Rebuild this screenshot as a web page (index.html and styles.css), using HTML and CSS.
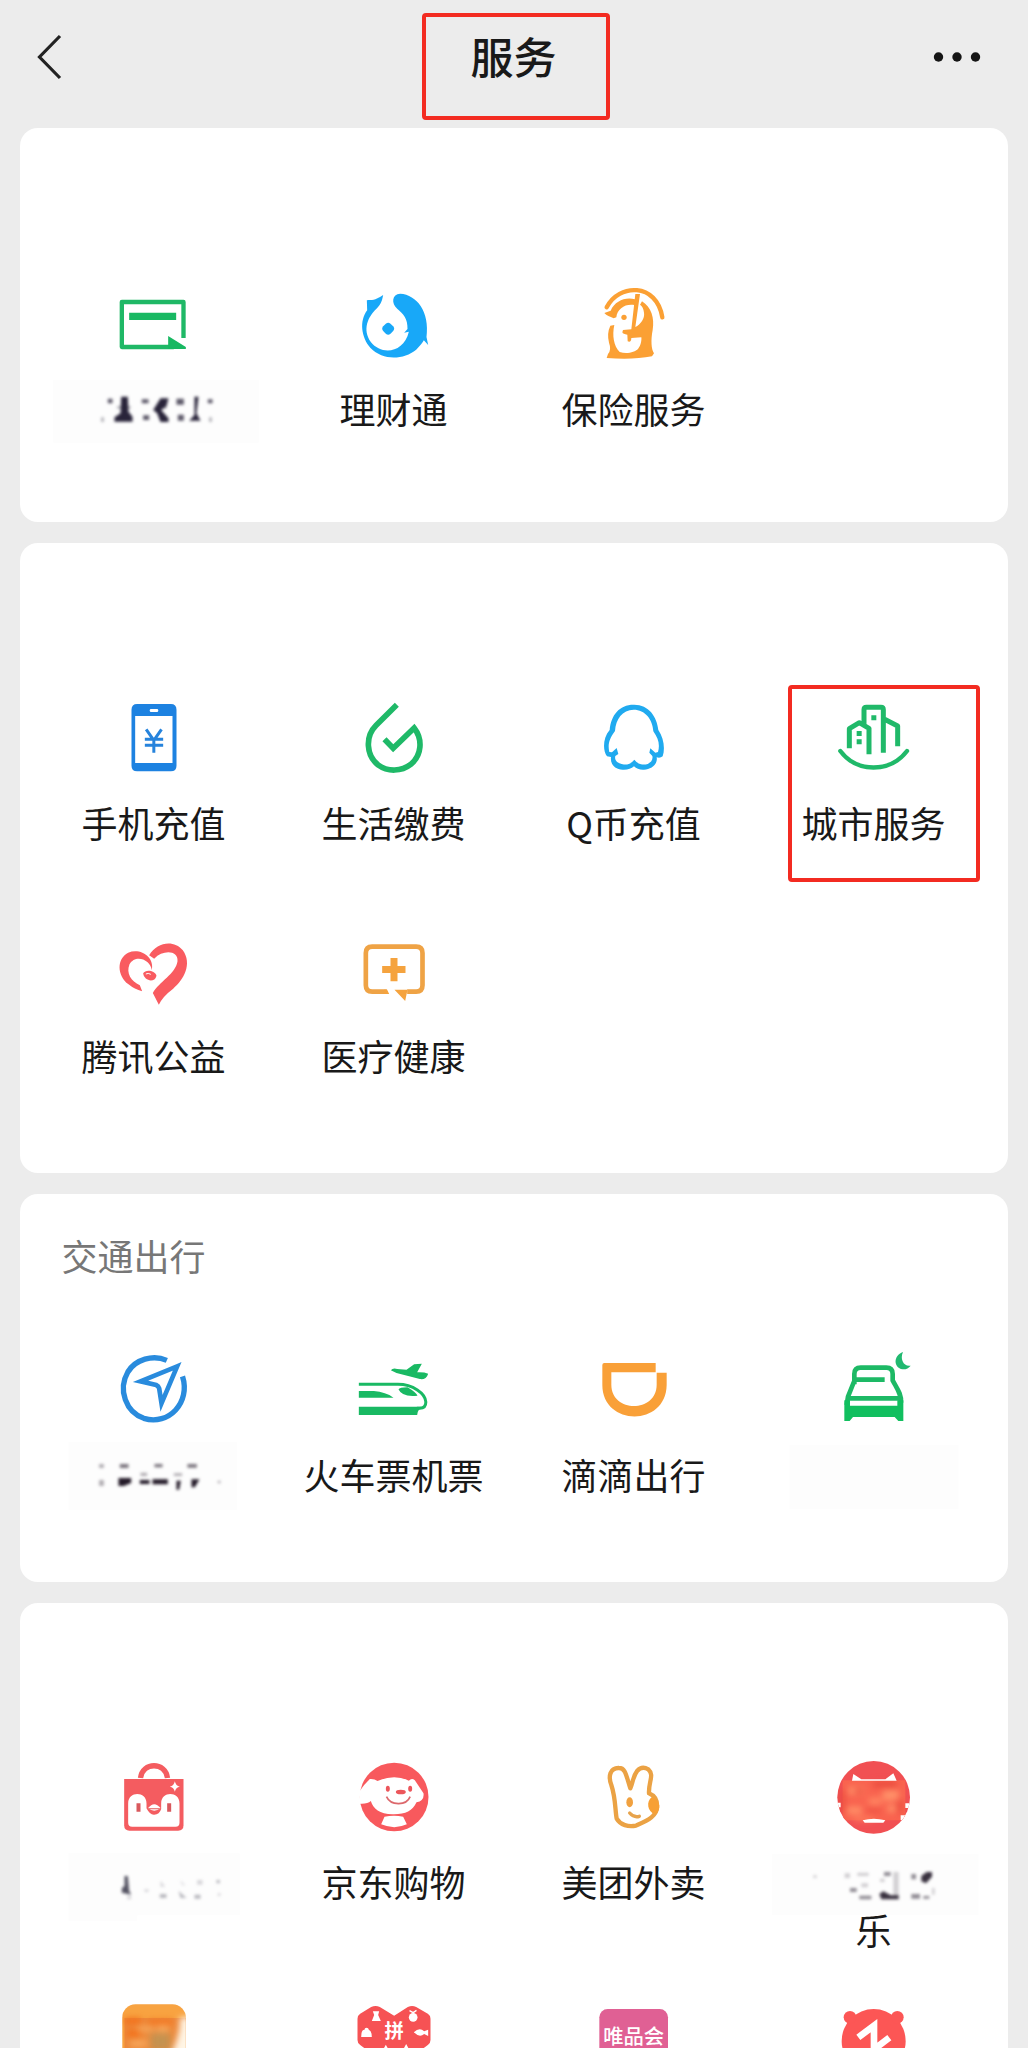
FILE: index.html
```html
<!DOCTYPE html>
<html lang="zh-CN">
<head>
<meta charset="utf-8">
<title>服务</title>
<link rel="stylesheet" href="styles.css">
</head>
<body>
<header class="navbar">
  <svg class="back" viewBox="0 0 30 50" fill="none" stroke="#222" stroke-width="3.2"><path d="M25 4 4.500 25 25 46"/></svg>
  <h1 class="title">服务<span class="mark mark-title"></span></h1>
  <svg class="more" viewBox="0 0 50 12" fill="#151515"><circle cx="6.500" cy="6" r="4.700"/><circle cx="25" cy="6" r="4.700"/><circle cx="43.500" cy="6" r="4.700"/></svg>
</header>

<main class="sections">
  <section class="card card-finance">
    <div class="heading"></div>
    <div class="grid">
      <div class="tile">
        <svg class="icon" viewBox="220.5 42 240 240"><path d="M429 204V96H244V231H400" fill="none" stroke="#1fb866" stroke-width="13" stroke-linejoin="round"/><path d="M266 128H407V150H266ZM383 198 436 231V237H383Z" fill="#18b862"/></svg>
        <svg class="smudge" viewBox="-19.500 348 720 144"><path class="patch" d="M38 330H655V518H38Z"/><g class="blur" fill="#29243a"><path d="M242 380H262L264 425 276 440V455H222V442L240 430ZM360 385H384L378 408 362 420 384 445V456H360L350 430 338 420ZM462 380H474L468 430 480 452H446L462 435Z"/><path d="M202 386h14v14h-14zM304 388h20v12h-20zM408 386h22v18h-22zM412 434h18v18h-18zM308 436h18v14h-18zM502 388h14v12h-14z" opacity=".75"/><path d="M182 442h8v14h-8zM506 442h8v14h-8zM230 408h40v8h-40zM348 408h30v8h-30z" opacity=".35"/></g></svg>
      </div>
      <div class="tile">
        <svg class="icon" viewBox="940.5 42 240 240" fill="#18a8f8"><path d="M1028 75C1000 94 996 88 979 91L980 121C956 153 962 202 990 234C1028 273 1090 269 1127 239C1139 228 1147 217 1150 211L1163 225 1158 201C1168 125 1129 74 1079 71C1054 72 1052 100 1070 116C1089 132 1102 146 1101 177L1091 188 1105 185C1090 249 1023 257 991 216C965 178 982 141 1008 116C1024 100 1025 89 1028 75Z"/><path d="M1036 161Q1043 155 1050 161L1058 169Q1064 176 1058 183L1050 191Q1043 197 1036 191L1028 183Q1022 176 1028 169Z"/></svg>
        <div class="label">理财通</div>
      </div>
      <div class="tile">
        <svg class="icon" viewBox="162 42 240 240" fill="#fba034"><path d="M200 112C236 40 350 37 367 142" fill="none" stroke="#fba034" stroke-width="13" stroke-linecap="round"/><path d="M193 129 212 122C225 93 256 80 285 88L283 105C257 100 232 115 229 142L221 145C209 139 200 138 193 129ZM306 94C334 111 344 145 338 180C332 211 334 238 342 250L336 259Q278 270 200 264L204 252Q215 239 207 218Q200 190 211 167L223 165C216 195 221 229 239 246C261 254 285 246 294 237C304 225 305 208 304 202L274 204Q274 218 263 214L262 194Q249 193 247 187L249 180 274 178 286 72H300L286 171C302 163 315 145 312 128Q310 110 300 104Z"/><circle cx="252" cy="142" r="8"/></svg>
        <div class="label">保险服务</div>
      </div>
    </div>
  </section>

  <section class="card card-life">
    <div class="heading"></div>
    <div class="grid">
      <div class="tile">
        <svg class="icon" viewBox="160.500 54 240 240"><path fill="#1d82e1" fill-rule="evenodd" d="M230 72H331Q348 72 348 89V257Q348 274 331 274H230Q213 274 213 257V89Q213 72 230 72ZM224 108V249H336V108ZM270 87Q265 92 270 96H291Q296 92 291 87Z"/><path d="M257 148 280 181 303 148M253 178H308M253 196H308M280 178V218" fill="none" stroke="#2683dc" stroke-width="9"/></svg>
        <div class="label">手机充值</div>
      </div>
      <div class="tile">
        <svg class="icon" viewBox="880.500 54 240 240"><path d="M1009 74 947 136C913 170 917 226 953 255C982 276 1023 275 1051 253C1083 226 1088 179 1061 144L998 205 972 178" fill="none" stroke="#1fb968" stroke-width="17"/></svg>
        <div class="label">生活缴费</div>
      </div>
      <div class="tile">
        <svg class="icon" viewBox="162 84 240 240"><path fill="#20aaef" fill-rule="evenodd" d="M281 104C325 103 351 139 355 180C371 204 376 235 368 259Q361 265 350 262C354 283 334 298 312 299Q293 300 282 289Q270 300 248 299C224 298 210 282 213 261L201 259C188 242 188 204 209 180C213 136 237 104 281 104ZM281 119C247 119 227 148 225 183C207 207 203 225 208 246L216 247 230 234 235 252 226 258C220 280 254 286 264 283Q274 280 283 269Q292 281 303 283C325 287 341 274 337 258L328 248 331 235 346 248 354 246C360 224 356 207 340 184C338 148 315 119 281 119Z"/></svg>
        <div class="label">Q币充值</div>
      </div>
      <div class="tile">
        <svg class="icon" viewBox="882 84 240 240"><g fill="none" stroke="#20b969" stroke-width="15"><path d="M928 235V176L958 158 987 175V253M972 162V119Q972 112 979 112H1023Q1030 112 1030 119V248M1031 146 1073 168V229" stroke-linejoin="round"/><path d="M901 243C951 309 1050 309 1101 243" stroke-linecap="round" stroke-width="13"/></g><path fill="#20b969" d="M950 183h15v15h-15zM950 208h15v15h-15zM994 136h15v15h-15z"/></svg>
        <div class="label">城市服务</div>
        <span class="mark mark-city"></span>
      </div>
      <div class="tile">
        <svg class="icon" viewBox="160.500 33 240 240" fill="#f95b60"><path d="M266 106C289 67 339 58 367 91C396 132 370 180 338 206Q307 229 295 254L277 219C295 187 346 161 351 124C354 90 307 89 281 116Z"/><path d="M274 151C283 111 240 83 203 98C168 116 169 166 204 193Q222 208 245 214L238 196C212 183 196 161 207 133C224 101 271 118 274 151Z"/><path d="M248 160C255 147 283 151 288 167C282 191 250 182 248 160Z"/><path d="M256 162Q263 158 271 163" fill="none" stroke="#fff" stroke-width="3"/></svg>
        <div class="label">腾讯公益</div>
      </div>
      <div class="tile">
        <svg class="icon" viewBox="880.500 33 240 240"><path d="M979 215H935Q916 215 916 196V99Q916 80 935 80H1067Q1086 80 1086 99V196Q1086 215 1067 215H1040" fill="none" stroke="#efa345" stroke-width="14"/><path fill="#f5a33e" d="M971 209H980L986 222H970ZM1002 209H1041L1034 243ZM990 114H1011V138H1035V159H1011V184H990V159H965V138H990Z"/></svg>
        <div class="label">医疗健康</div>
      </div>
    </div>
  </section>

  <section class="card card-travel">
    <div class="heading">交通出行</div>
    <div class="grid">
      <div class="tile">
        <svg class="icon" viewBox="160.500 60 240 240" fill="none" stroke="#298bdd"><path d="M319 91C277 73 225 88 202 126C171 180 197 247 250 265C325 288 391 217 366 139" stroke-width="16"/><path d="M350 109 240 154 287 165Q294 168 296 175L303 220Z" stroke-width="14"/></svg>
        <svg class="smudge" viewBox="-79.500 366 720 144"><path class="patch" d="M24 336H530V540H24Z"/><g class="blur" fill="#241b29"><path d="M174 444H212V459L190 468H174ZM238 450H267V462H238ZM276 448H322V463H276ZM348 452H361L356 479H348ZM393 448H417L403 472H393Z"/><path d="M178 402h26v12h-26zM282 402h24v10h-24zM381 402h28v11h-28z" opacity=".6"/><path d="M116 402h14v12h-14zM116 450h14v18h-14zM240 428h20v10h-20zM340 430h25v8h-25zM472 452h8v8h-8z" opacity=".35"/></g></svg>
      </div>
      <div class="tile">
        <svg class="icon" viewBox="880.500 60 240 240" fill="#19b963"><path d="M895 163H1012C1057 163 1095 190 1096 216Q1096 235 1078 235H1069" fill="none" stroke="#19b963" stroke-width="9"/><path d="M895 230H1088Q1070 238 1070 255H895ZM895 183H940Q976 186 999 203H895ZM1014 178Q1017 172 1041 172Q1065 186 1071 197Q1024 202 1014 178ZM991 121Q997 113 1010 117L1038 119 1061 103 1084 101 1070 127Q1091 126 1103 131C1099 144 1090 149 1078 147L1008 129Z"/></svg>
        <div class="label">火车票机票</div>
      </div>
      <div class="tile">
        <svg class="icon" viewBox="162 60 240 240"><path fill="#f9a038" d="M193 99H347V127H214V164C214 249 350 249 350 164V128H380V165C378 292 187 289 187 165V105Q187 99 193 99Z"/></svg>
        <div class="label">滴滴出行</div>
      </div>
      <div class="tile">
        <svg class="icon" viewBox="882 60 240 240"><path d="M943 163V132Q943 113 962 113H1039Q1058 113 1058 132V151C1070 174 1085 192 1083 218M944 150 924 200 920 225M941 149H1034M925 205H1078" fill="none" stroke="#1db965" stroke-width="14"/><path fill="#11bf5f" d="M913 211H930V227H1072V211H1090V273H1075L1064 261H939L929 273H913Z"/><path fill="#21b970" d="M1089 66C1059 77 1060 113 1088 118Q1103 119 1112 107C1091 111 1079 87 1089 66Z"/></svg>
        <svg class="smudge" viewBox="642 366 720 144"><path class="patch" d="M749 345H1256V538H749Z"/></svg>
      </div>
    </div>
  </section>

  <section class="card card-shop">
    <div class="heading"></div>
    <div class="grid">
      <div class="tile">
        <svg class="icon" viewBox="160.500 51 240 240"><path d="M240 114C246 65 315 65 321 114" fill="none" stroke="#f45c60" stroke-width="16"/><path fill="#f45c60" d="M191 117H369V256Q369 272 353 272H207Q191 272 191 256Z"/><path fill="#fff" d="M203 190C203 153 258 153 258 190V205Q268 225 281 224Q297 224 302 207V190C302 153 357 153 357 190V248Q357 260 345 260H215Q203 260 203 248ZM343 124Q346 138 358 140Q346 142 343 155Q340 142 328 140Q340 138 343 124Z"/><path fill="#d9595d" d="M228 190h12v25h-12zM320 190h12v25h-12z"/><path fill="#fff" d="M263 204Q281 181 300 204 281 220 263 204Z"/><path d="M264 206H298" stroke="#e98180" stroke-width="4"/></svg>
        <svg class="smudge" viewBox="-79.500 357 720 144"><path class="patch" d="M24 340H538V526H230V542H24Z"/><g class="blur" fill="#555463"><path d="M192 408H202L206 452 212 464 184 458V444L192 438Z"/><path d="M298 462h20v12h-20zM354 452l24 22h-18zM402 464h18v12h-18zM468 420h10v10h-10z" opacity=".4"/><path d="M200 468h12v10h-12zM252 448h12v8h-12zM300 422l14 18h-14zM358 420l16 16h-8zM410 420h16v14h-16zM472 460h8v8h-8z" opacity=".22"/></g></svg>
      </div>
      <div class="tile">
        <svg class="icon" viewBox="880.500 51 240 240"><circle cx="1001" cy="171" r="103" fill="#f8595d"/><path fill="#fff" d="M896 155Q907 137 928 117Q942 116 951 123Q1002 101 1045 122Q1054 113 1063 121L1089 160Q1092 182 1068 187C1056 213 1036 223 1000 223C958 224 938 206 931 183Q920 193 897 191ZM972 230Q1001 224 1028 230L1039 253Q1002 270 962 253Z"/><path d="M978 170C990 197 1037 199 1049 170" stroke="#dc686c" stroke-width="5" fill="none"/><g fill="#ec565b"><ellipse cx="982" cy="146" rx="6" ry="9"/><ellipse cx="1049" cy="146" rx="6" ry="9"/><ellipse cx="1021" cy="156" rx="15" ry="7"/></g></svg>
        <div class="label">京东购物</div>
      </div>
      <div class="tile">
        <svg class="icon" viewBox="162 51 240 240"><path d="M271 145C258 106 257 84 237 84C210 83 204 109 214 135C227 174 225 208 230 236C241 255 265 262 288 257C311 246 355 231 351 196Q351 170 327 160C325 125 344 105 325 88Q306 77 292 92C278 110 279 128 271 145Z" fill="none" stroke="#eba244" stroke-width="13" stroke-linejoin="round"/><path d="M336 171C362 181 365 210 345 223C321 214 318 184 336 171Z" fill="#f7a035"/><ellipse cx="269" cy="187" rx="10" ry="15" fill="#f1a13f"/><path d="M269 219Q282 234 298 229" fill="none" stroke="#e7a34c" stroke-width="10" stroke-linecap="round"/></svg>
        <div class="label">美团外卖</div>
      </div>
      <div class="tile">
        <svg class="icon" viewBox="882 51 240 240"><defs><clipPath id="disc"><circle cx="1001" cy="172" r="109"/></clipPath></defs><g clip-path="url(#disc)"><path fill="#f15053" d="M882 51h240v240H882z"/><path fill="#f9634f" d="M908 121h188v120H908z"/><g class="blur-wide"><path fill="#ff9068" d="M925 140h48v24h-48zM1028 150h48v32h-48zM920 200h46v22h-46zM1042 196h36v20h-36z"/><path fill="#e94a3d" d="M945 146h24v14h-24zM1000 124h70v18h-70zM980 206h42v10h-42zM1070 180h16v40h-16zM900 150h14v70h-14z"/><path fill="#ff8360" d="M985 172h40v24h-40zM940 232h60v10h-60z"/></g><path fill="#fff" d="M940 102 964 118H1036L1060 100 1070 122H936ZM968 241Q1001 232 1036 241L1030 248H974ZM1096 190h14v14h-14zM1082 226h14v14h-14zM892 188h10v14h-10z"/><path d="M966 113H1036" stroke="#f15053" stroke-width="7"/></g></svg>
        <svg class="smudge" viewBox="642 357 720 144"><path class="patch" d="M697 342H1316V526H697Z"/><g class="blur" fill="#39313f"><path d="M1018 462 1030 454 1052 466H1076V478H1024ZM1144 408 1160 396H1176V410L1158 430 1144 424Z"/><path d="M930 444h20v12h-20zM958 467h36v11h-36zM1032 396h20v12h-20zM1114 402h14v16h-14zM1114 462h26v14h-26zM1150 468h18v8h-18z" opacity=".55"/><path d="M914 400h16v14h-16zM952 398h34v10h-34zM964 430h20v12h-20zM1060 396h16v80h-16zM1020 416h14v10h-14zM1176 444h8v20h-8zM820 406h10v8h-10z" opacity=".22"/></g></svg>
        <div class="label">乐</div>
      </div>
      <div class="tile">
        <svg class="icon" viewBox="160.500 69 240 240"><defs><clipPath id="rounded"><rect x="185" y="73" width="191" height="204" rx="40"/></clipPath></defs><g clip-path="url(#rounded)"><path fill="#f8a341" d="M185 72h192v220H185z"/><path fill="#ed8a3c" d="M192 114h185v180H192z"/><g class="blur-wide"><path fill="#f36e17" d="M192 114h50v18h-50zM262 120h74v12h-74zM200 150h40v20h-40z"/><path fill="#f6a85c" d="M230 138h50v16h-50zM290 135h34v20h-34zM210 180h50v20h-50z"/><path fill="#c49250" d="M270 160h60v50h-60z"/><path fill="#fff5e5" d="M358 112H396V232H326Q362 165 358 112Z"/></g></g></svg>
      </div>
      <div class="tile">
        <svg class="icon" viewBox="880.500 69 240 240"><path fill="#f65254" d="M932 81Q945 75 958 81L1001 107 1042 81Q1055 75 1067 81L1102 101Q1110 106 1110 116V180Q1110 190 1102 195L1001 270 899 195Q891 190 891 180V116Q891 106 899 101Z"/><text class="glyph-pin" x="1001" y="174">拼</text><path fill="#fff" d="M937 94H956L953 105 961 123H934L941 105ZM903 160Q904 150 912 149Q912 143 918 143Q924 143 925 149Q934 153 934 171H902ZM1060 157Q1077 140 1091 154L1103 149V168L1091 162Q1077 174 1060 157ZM970 205 976 194 982 205ZM1030 205 1037 192 1044 205Z"/><circle cx="1058" cy="112" r="13" fill="#fff"/><path d="M1047 92 1058 98 1068 91" stroke="#fff" stroke-width="4" fill="none"/></svg>
      </div>
      <div class="tile">
        <svg class="icon" viewBox="162 69 240 240"><rect x="178" y="87" width="206" height="206" rx="25" fill="#e06094"/><text class="glyph-vip" x="281" y="191">唯品会</text></svg>
      </div>
      <div class="tile">
        <svg class="icon" viewBox="882 69 240 240" fill="#fc5655"><circle cx="1001" cy="183" r="96"/><circle cx="930" cy="112" r="19"/><circle cx="1072" cy="112" r="19"/><path d="M955 172 1002 137V208L1048 173" fill="none" stroke="#fff" stroke-width="20" stroke-linejoin="miter"/></svg>
      </div>
    </div>
  </section>
</main>
</body>
</html>
```
FILE: styles.css
```css
* {
  box-sizing: border-box;
}

body {
  display: flex;
  flex-direction: column;
  margin: 0;
  width: 1028px;
  height: 2048px;
  overflow: hidden;
  background: #ececec;
  color: #191919;
  font-family: "Noto Sans CJK SC", sans-serif;
}

.navbar {
  display: flex;
  flex: none;
  align-items: center;
  justify-content: space-between;
  height: 128px;
  padding: 0 46px 14px 35px;
}

.back {
  width: 30px;
  height: 50px;
}

.title {
  position: relative;
  margin: -5px 0 0 30px;
  font-size: 43px;
  font-weight: 500;
  line-height: 64px;
}

.more {
  width: 50px;
  height: 12px;
}

.mark {
  position: absolute;
  border: 4px solid #f32b21;
  border-radius: 4px;
}

.mark-title {
  left: -49px;
  top: -10px;
  width: 188px;
  height: 107px;
}

.mark-city {
  left: 34.5px;
  top: -13px;
  width: 192px;
  height: 197px;
}

.sections {
  display: flex;
  flex: 1;
  flex-direction: column;
  gap: 21px;
  min-height: 0;
  padding: 0 20px;
}

.card {
  flex: none;
  padding: 0 13.5px;
  border-radius: 18px;
  background: #fff;
}

.card-finance {
  height: 394px;
}

.card-life {
  height: 630px;
}

.card-travel {
  height: 388px;
}

.card-shop {
  flex: 1;
  min-height: 0;
  overflow: hidden;
  border-radius: 18px 18px 0 0;
}

.heading {
  height: 156px;
  padding: 37px 28px 0;
  color: #777;
  font-size: 36px;
  line-height: 48px;
}

.card-life .heading {
  height: 155px;
}

.card-shop .heading {
  height: 154px;
}

.grid {
  display: grid;
  grid-template-columns: repeat(4, 240px);
  row-gap: 83px;
}

.card-shop .grid {
  row-gap: 48px;
}

.tile {
  position: relative;
  display: flex;
  flex-direction: column;
  align-items: center;
}

.icon {
  width: 80px;
  height: 80px;
  margin-bottom: 20px;
}

.label {
  padding-bottom: 2px;
  font-size: 36px;
  line-height: 48px;
  white-space: nowrap;
}

.smudge {
  width: 240px;
  height: 48px;
  margin-top: 2px;
  overflow: visible;
}

.smudge + .label {
  margin-top: -2px;
}

.patch {
  fill: #fdfdfd;
}

.blur {
  filter: blur(5.5px);
}

.blur-wide {
  filter: blur(9px);
}

.glyph-pin,
.glyph-vip {
  fill: #fff;
  font-weight: 500;
  text-anchor: middle;
}

.glyph-pin {
  font-size: 58px;
  font-weight: 700;
}

.glyph-vip {
  font-size: 61px;
}
```
